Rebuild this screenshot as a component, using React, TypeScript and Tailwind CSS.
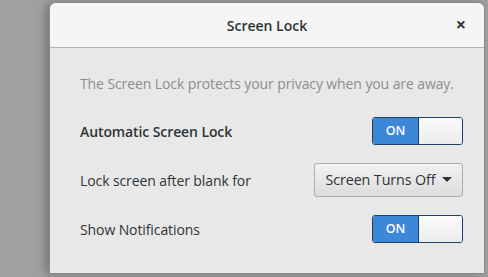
import React from "react";

function Switch() {
  return (
    <div className="flex h-[28px] w-[91px] overflow-hidden rounded-[3px] border border-[#1e3f66]">
      <div className="flex w-[45px] items-center justify-center bg-[#3d87d9] text-[12.5px] font-semibold text-white">
        ON
      </div>
      <div className="flex-1 border-l border-[#1e3f66] bg-gradient-to-b from-[#fafafa] to-[#ececec]" />
    </div>
  );
}

export default function App() {
  return (
    <div
      className="h-[277px] w-[488px] overflow-hidden bg-[#a0a0a0] pl-[49px] pt-[2px]"
      style={{ fontFamily: '"Open Sans", "Noto Sans", sans-serif' }}
    >
      <div className="flex h-[272px] w-[436px] flex-col overflow-hidden rounded-t-[7px] border border-[#8a8a8a] bg-[#e8e8e8] shadow-[-4px_0_8px_rgba(0,0,0,0.25)]">
        <div className="relative flex h-[45px] shrink-0 items-center justify-center border-b border-[#b3b3b3] bg-[#f5f5f5]">
          <span className="text-[14px] font-semibold text-[#2e3436]">Screen Lock</span>
          <span className="absolute right-[18px] top-[12px] text-[18px] font-bold leading-none text-[#2e3436]">×</span>
        </div>
        <div className="flex flex-col pl-[30px] pr-[21px] text-[14px] tracking-[-0.1px]">
          <div className="mt-[26px] leading-[20px] text-[#8b8e8f]">
            The Screen Lock protects your privacy when you are away.
          </div>
          <div className="mt-[23px] flex h-[28px] items-center justify-between">
            <span className="font-semibold text-[#2e3436]">Automatic Screen Lock</span>
            <Switch />
          </div>
          <div className="mt-[18px] flex h-[34px] items-center justify-between">
            <span className="text-[#2e3436]">Lock screen after blank for</span>
            <div className="flex h-[34px] w-[149px] items-center justify-center gap-[6px] rounded-[3px] border border-[#adadad] bg-gradient-to-b from-[#f2f2f2] to-[#dcdcdc] text-[14.3px] text-[#2e3436]">
              <span>Screen Turns Off</span>
              <svg width="10" height="6" viewBox="0 0 10 6">
                <path d="M0 0 L10 0 L5 5 Z" fill="#2e3436" />
              </svg>
            </div>
          </div>
          <div className="mt-[18px] flex h-[28px] items-center justify-between">
            <span className="text-[#2e3436]">Show Notifications</span>
            <Switch />
          </div>
        </div>
      </div>
    </div>
  );
}
